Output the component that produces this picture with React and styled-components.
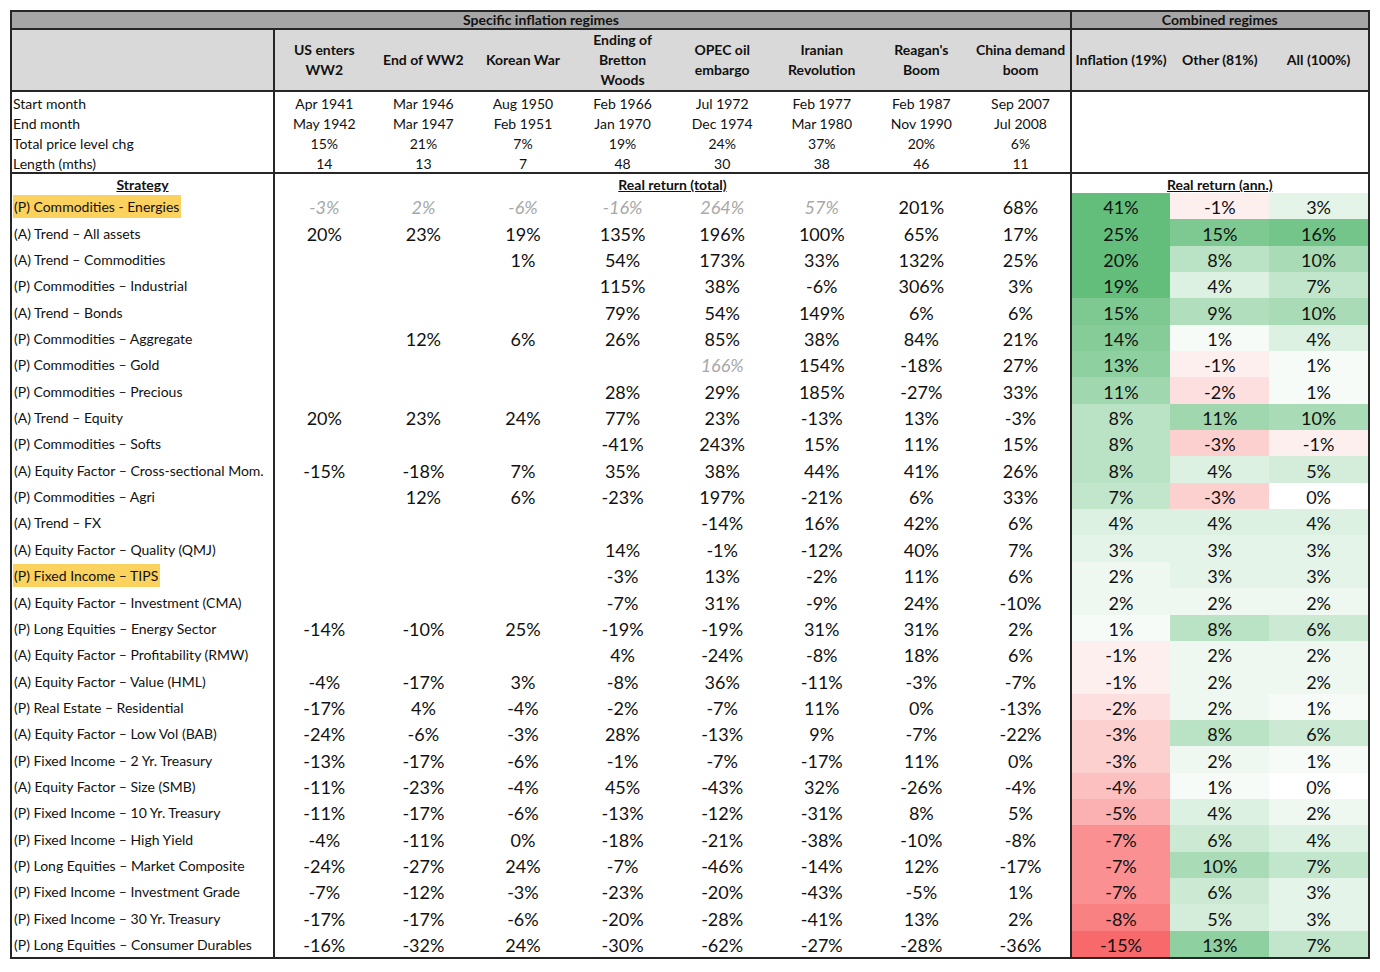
import React from 'react';
import styled, { createGlobalStyle } from 'styled-components';

const LINE = '#262626';

const GlobalStyle = createGlobalStyle`
  html, body {
    margin: 0;
    background: #fff;
  }
  body {
    font-family: Lato, "Open Sans", sans-serif;
    color: #111;
  }
`;

const Page = styled.div`
  padding: 10px 0 0 10px;
`;

const Sheet = styled.table`
  border-collapse: collapse;
  table-layout: fixed;
  width: 1358px;
  border: 2px solid ${LINE};
`;

const Band = styled.th`
  height: 16px;
  padding: 0;
  background: #a6a6a6;
  font-size: 14px;
  font-weight: 700;
  line-height: 16px;
  text-align: center;
  border-bottom: 2px solid ${LINE};
  border-right: ${p => (p.$rule ? `2px solid ${LINE}` : 'none')};
`;

const ColHead = styled.th`
  height: 59px;
  padding: 0 2px;
  background: #d9d9d9;
  font-size: 14px;
  font-weight: 700;
  line-height: 20px;
  text-align: center;
  vertical-align: middle;
  white-space: nowrap;
  border-bottom: 2px solid ${LINE};
  border-right: ${p => (p.$rule ? `2px solid ${LINE}` : 'none')};
`;

const InfoLabel = styled.td`
  height: 20px;
  padding: 0 0 0 1px;
  font-size: 14px;
  line-height: 17px;
  vertical-align: bottom;
  white-space: nowrap;
  border-right: 2px solid ${LINE};
  border-bottom: ${p => (p.$last ? `2px solid ${LINE}` : 'none')};
`;

const InfoValue = styled.td`
  height: 20px;
  padding: 0;
  font-size: 14px;
  line-height: 17px;
  text-align: center;
  vertical-align: bottom;
  border-right: ${p => (p.$rule ? `2px solid ${LINE}` : 'none')};
  border-bottom: ${p => (p.$last ? `2px solid ${LINE}` : 'none')};
`;

const Caption = styled.td`
  height: 19px;
  padding: 0;
  font-size: 14px;
  font-weight: 700;
  line-height: 17px;
  text-align: center;
  vertical-align: bottom;
  text-decoration: underline;
  border-right: ${p => (p.$rule ? `2px solid ${LINE}` : 'none')};
`;

const Label = styled.td`
  height: 25.35px;
  padding: 0 0 1px 1px;
  font-size: 14px;
  line-height: 22px;
  vertical-align: bottom;
  white-space: nowrap;
  overflow: hidden;
  border-right: 2px solid ${LINE};
`;

const Marker = styled.span`
  display: inline-block;
  padding: 0 2px 0 1px;
  line-height: 23px;
  background: ${p => (p.$on ? '#fcd25f' : 'transparent')};
`;

const Value = styled.td`
  padding: 0 0 1px;
  font-size: 18px;
  line-height: 22px;
  text-align: center;
  vertical-align: bottom;
  color: ${p => (p.$muted ? '#a8a8a8' : '#111')};
  font-style: ${p => (p.$muted ? 'italic' : 'normal')};
  border-right: ${p => (p.$rule ? `2px solid ${LINE}` : 'none')};
`;

const mix = (to, t) =>
  `rgb(${[0, 1, 2].map(i => Math.round(255 + (to[i] - 255) * t)).join(',')})`;

const heat = v =>
  v >= 0
    ? mix([99, 190, 123], Math.min(1, v / 18))
    : mix([248, 105, 107], Math.min(1, -v / 9.5));

const HeatCell = styled(Value)`
  background: ${p => heat(p.$v)};
`;

const regimes = [
  { title: ['US enters', 'WW2'], start: 'Apr 1941', end: 'May 1942', chg: '15%', len: '14' },
  { title: ['End of WW2'], start: 'Mar 1946', end: 'Mar 1947', chg: '21%', len: '13' },
  { title: ['Korean War'], start: 'Aug 1950', end: 'Feb 1951', chg: '7%', len: '7' },
  { title: ['Ending of', 'Bretton', 'Woods'], start: 'Feb 1966', end: 'Jan 1970', chg: '19%', len: '48' },
  { title: ['OPEC oil', 'embargo'], start: 'Jul 1972', end: 'Dec 1974', chg: '24%', len: '30' },
  { title: ['Iranian', 'Revolution'], start: 'Feb 1977', end: 'Mar 1980', chg: '37%', len: '38' },
  { title: ["Reagan's", 'Boom'], start: 'Feb 1987', end: 'Nov 1990', chg: '20%', len: '46' },
  { title: ['China demand', 'boom'], start: 'Sep 2007', end: 'Jul 2008', chg: '6%', len: '11' },
];

const combined = ['Inflation (19%)', 'Other (81%)', 'All (100%)'];

const info = [
  ['Start month', 'start'],
  ['End month', 'end'],
  ['Total price level chg', 'chg'],
  ['Length (mths)', 'len'],
];

// null = empty cell, '~' prefix = greyed out value
const rows = [
  ['(P) Commodities - Energies', ['~-3', '~2', '~-6', '~-16', '~264', '~57', 201, 68], [41, -1, 3], true],
  ['(A) Trend – All assets', [20, 23, 19, 135, 196, 100, 65, 17], [25, 15, 16]],
  ['(A) Trend – Commodities', [null, null, 1, 54, 173, 33, 132, 25], [20, 8, 10]],
  ['(P) Commodities – Industrial', [null, null, null, 115, 38, -6, 306, 3], [19, 4, 7]],
  ['(A) Trend – Bonds', [null, null, null, 79, 54, 149, 6, 6], [15, 9, 10]],
  ['(P) Commodities – Aggregate', [null, 12, 6, 26, 85, 38, 84, 21], [14, 1, 4]],
  ['(P) Commodities – Gold', [null, null, null, null, '~166', 154, -18, 27], [13, -1, 1]],
  ['(P) Commodities – Precious', [null, null, null, 28, 29, 185, -27, 33], [11, -2, 1]],
  ['(A) Trend – Equity', [20, 23, 24, 77, 23, -13, 13, -3], [8, 11, 10]],
  ['(P) Commodities – Softs', [null, null, null, -41, 243, 15, 11, 15], [8, -3, -1]],
  ['(A) Equity Factor – Cross-sectional Mom.', [-15, -18, 7, 35, 38, 44, 41, 26], [8, 4, 5]],
  ['(P) Commodities – Agri', [null, 12, 6, -23, 197, -21, 6, 33], [7, -3, 0]],
  ['(A) Trend – FX', [null, null, null, null, -14, 16, 42, 6], [4, 4, 4]],
  ['(A) Equity Factor – Quality (QMJ)', [null, null, null, 14, -1, -12, 40, 7], [3, 3, 3]],
  ['(P) Fixed Income – TIPS', [null, null, null, -3, 13, -2, 11, 6], [2, 3, 3], true],
  ['(A) Equity Factor – Investment (CMA)', [null, null, null, -7, 31, -9, 24, -10], [2, 2, 2]],
  ['(P) Long Equities – Energy Sector', [-14, -10, 25, -19, -19, 31, 31, 2], [1, 8, 6]],
  ['(A) Equity Factor – Profitability (RMW)', [null, null, null, 4, -24, -8, 18, 6], [-1, 2, 2]],
  ['(A) Equity Factor – Value (HML)', [-4, -17, 3, -8, 36, -11, -3, -7], [-1, 2, 2]],
  ['(P) Real Estate – Residential', [-17, 4, -4, -2, -7, 11, 0, -13], [-2, 2, 1]],
  ['(A) Equity Factor – Low Vol (BAB)', [-24, -6, -3, 28, -13, 9, -7, -22], [-3, 8, 6]],
  ['(P) Fixed Income – 2 Yr. Treasury', [-13, -17, -6, -1, -7, -17, 11, 0], [-3, 2, 1]],
  ['(A) Equity Factor – Size (SMB)', [-11, -23, -4, 45, -43, 32, -26, -4], [-4, 1, 0]],
  ['(P) Fixed Income – 10 Yr. Treasury', [-11, -17, -6, -13, -12, -31, 8, 5], [-5, 4, 2]],
  ['(P) Fixed Income – High Yield', [-4, -11, 0, -18, -21, -38, -10, -8], [-7, 6, 4]],
  ['(P) Long Equities – Market Composite', [-24, -27, 24, -7, -46, -14, 12, -17], [-7, 10, 7]],
  ['(P) Fixed Income – Investment Grade', [-7, -12, -3, -23, -20, -43, -5, 1], [-7, 6, 3]],
  ['(P) Fixed Income – 30 Yr. Treasury', [-17, -17, -6, -20, -28, -41, 13, 2], [-8, 5, 3]],
  ['(P) Long Equities – Consumer Durables', [-16, -32, 24, -30, -62, -27, -28, -36], [-15, 13, 7]],
];

function Cell({ v, rule }) {
  if (v === null) return <Value $rule={rule} />;
  const muted = typeof v === 'string';
  const num = muted ? v.slice(1) : v;
  return (
    <Value $rule={rule} $muted={muted}>
      {num}%
    </Value>
  );
}

export default function App() {
  return (
    <Page>
      <GlobalStyle />
      <Sheet>
        <colgroup>
          <col style={{ width: 263 }} />
          {regimes.map((r, i) => (
            <col key={i} style={{ width: 99.6 }} />
          ))}
          {combined.map(c => (
            <col key={c} style={{ width: 99.3 }} />
          ))}
        </colgroup>
        <thead>
          <tr>
            <Band colSpan={9} $rule>
              Specific inflation regimes
            </Band>
            <Band colSpan={3}>Combined regimes</Band>
          </tr>
          <tr>
            <ColHead $rule />
            {regimes.map((r, i) => (
              <ColHead key={i} $rule={i === regimes.length - 1}>
                {r.title.map((t, j) => (
                  <div key={j}>{t}</div>
                ))}
              </ColHead>
            ))}
            {combined.map(c => (
              <ColHead key={c}>{c}</ColHead>
            ))}
          </tr>
        </thead>
        <tbody>
          {info.map(([label, key], i) => {
            const last = i === info.length - 1;
            return (
              <tr key={key}>
                <InfoLabel $last={last}>{label}</InfoLabel>
                {regimes.map((r, j) => (
                  <InfoValue key={j} $last={last} $rule={j === regimes.length - 1}>
                    {r[key]}
                  </InfoValue>
                ))}
                <InfoValue colSpan={3} $last={last} />
              </tr>
            );
          })}
          <tr>
            <Caption $rule>Strategy</Caption>
            <Caption colSpan={8} $rule>
              Real return (total)
            </Caption>
            <Caption colSpan={3}>Real return (ann.)</Caption>
          </tr>
          {rows.map(([label, vals, comb, hl]) => (
            <tr key={label}>
              <Label>
                <Marker $on={hl}>{label}</Marker>
              </Label>
              {vals.map((v, j) => (
                <Cell key={j} v={v} rule={j === vals.length - 1} />
              ))}
              {comb.map((v, j) => (
                <HeatCell key={j} $v={v}>
                  {v}%
                </HeatCell>
              ))}
            </tr>
          ))}
        </tbody>
      </Sheet>
    </Page>
  );
}
